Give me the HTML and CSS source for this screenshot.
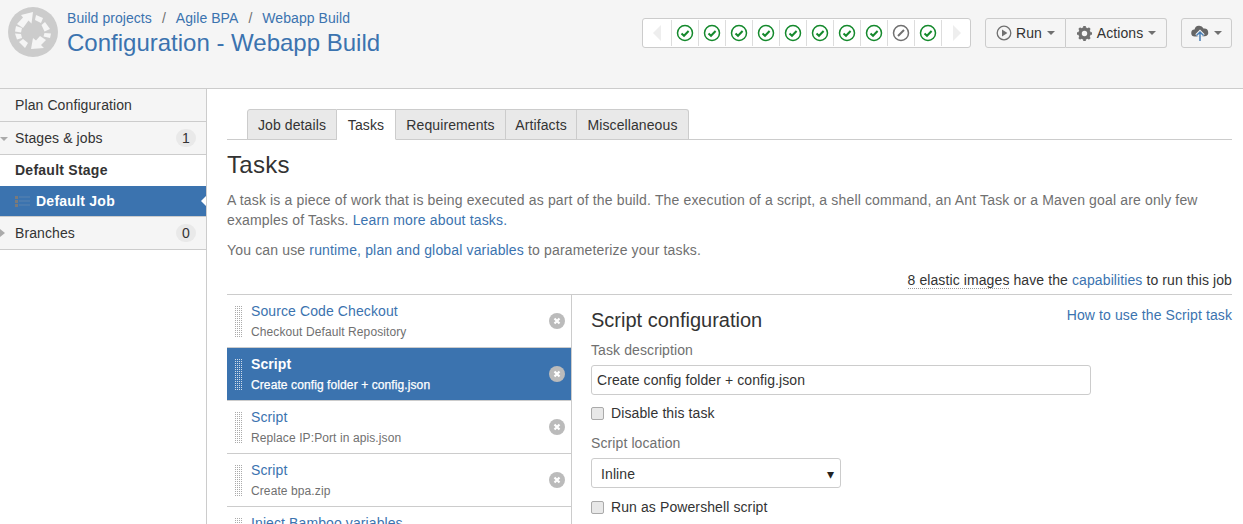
FILE: index.html
```html
<!DOCTYPE html>
<html lang="en">
<head>
    <meta charset="UTF-8">
    <title>Configuration - Webapp Build</title>
    <link rel="stylesheet" href="styles.css">
</head>
<body>
    <header class="page-header">
        <svg class="logo" width="50" height="50" viewBox="0 0 50 50">
            <circle cx="25" cy="25" r="25" fill="#ccc"/>
            <g fill="#f5f5f5">
                <path d="M25 5l-1.500 11.500-3-3L15 21l-6-4 6-6.500-2-2.500z"/>
                <path d="M28 8l7 3-2 5-6-3z"/>
                <path d="M37 15l5 7-5.500 2.500-3-6.500z"/>
                <path d="M36.500 26l6.500.500-1 4.500-6.500-1.500z"/>
                <path d="M23 42l2-11 3 2.500 4-4.500 6 4-5 5 3 3z"/>
                <path d="M15 32l5 4-3 5-6-6z"/>
                <path d="M7 26.500l6 .500 1 4-5 1.500z"/>
                <path d="M8 19l6 2-1 4.500-6-1z"/>
            </g>
        </svg>
        <div class="title-block">
            <div class="breadcrumb">
                <a href="#">Build projects</a><span class="sep">/</span><a href="#">Agile BPA</a><span class="sep">/</span><a href="#">Webapp Build</a>
            </div>
            <h1><a href="#">Configuration - Webapp Build</a></h1>
        </div>
        <div class="ribbon">
            <span class="cell arrow"><svg width="12" height="18" viewBox="0 0 12 18"><path d="M9 1v16L1 9z" fill="#eee"/></svg></span>
            <span class="cell"><svg class="ok" width="18" height="18" viewBox="0 0 18 18"><circle cx="9" cy="9" r="7.5"/><path d="M5.5 9.5l2.5 2.3 4.6-4.8"/></svg></span>
            <span class="cell"><svg class="ok" width="18" height="18" viewBox="0 0 18 18"><circle cx="9" cy="9" r="7.5"/><path d="M5.5 9.5l2.5 2.3 4.6-4.8"/></svg></span>
            <span class="cell"><svg class="ok" width="18" height="18" viewBox="0 0 18 18"><circle cx="9" cy="9" r="7.5"/><path d="M5.5 9.5l2.5 2.3 4.6-4.8"/></svg></span>
            <span class="cell"><svg class="ok" width="18" height="18" viewBox="0 0 18 18"><circle cx="9" cy="9" r="7.5"/><path d="M5.5 9.5l2.5 2.3 4.6-4.8"/></svg></span>
            <span class="cell"><svg class="ok" width="18" height="18" viewBox="0 0 18 18"><circle cx="9" cy="9" r="7.5"/><path d="M5.5 9.5l2.5 2.3 4.6-4.8"/></svg></span>
            <span class="cell"><svg class="ok" width="18" height="18" viewBox="0 0 18 18"><circle cx="9" cy="9" r="7.5"/><path d="M5.5 9.5l2.5 2.3 4.6-4.8"/></svg></span>
            <span class="cell"><svg class="ok" width="18" height="18" viewBox="0 0 18 18"><circle cx="9" cy="9" r="7.5"/><path d="M5.5 9.5l2.5 2.3 4.6-4.8"/></svg></span>
            <span class="cell"><svg class="ok" width="18" height="18" viewBox="0 0 18 18"><circle cx="9" cy="9" r="7.5"/><path d="M5.5 9.5l2.5 2.3 4.6-4.8"/></svg></span>
            <span class="cell"><svg class="skip" width="18" height="18" viewBox="0 0 18 18"><circle cx="9" cy="9" r="7.5"/><path d="M6 12l6-6"/></svg></span>
            <span class="cell"><svg class="ok" width="18" height="18" viewBox="0 0 18 18"><circle cx="9" cy="9" r="7.5"/><path d="M5.5 9.5l2.5 2.3 4.6-4.8"/></svg></span>
            <span class="cell arrow last"><svg width="12" height="18" viewBox="0 0 12 18"><path d="M3 1v16l8-8z" fill="#eee"/></svg></span>
        </div>
        <div class="btn-group">
            <button class="btn btn-run" type="button">
                <svg width="16" height="16" viewBox="0 0 16 16"><circle cx="8" cy="8" r="6.8" fill="none" stroke="#707070" stroke-width="1.3"/><path d="M6 4.5v7l5.4-3.5z" fill="#707070"/></svg>
                Run<span class="caret"></span>
            </button>
            <button class="btn btn-actions" type="button">
                <svg width="17" height="17" viewBox="0 0 17 17"><circle cx="8.5" cy="8.5" r="4.6" fill="none" stroke="#707070" stroke-width="3.2"/><path d="M8.5 1v15M1 8.500h15M3.200 3.200l10.600 10.600M13.800 3.200L3.200 13.800" stroke="#707070" stroke-width="2.600"/><circle cx="8.500" cy="8.500" r="2.700" fill="#f5f5f5"/></svg>
                Actions<span class="caret"></span>
            </button>
        </div>
        <button class="btn btn-cloud" type="button">
            <svg width="18" height="18" viewBox="0 0 18 18"><path d="M4 12.500a3.500 3.500 0 0 1-.5-7 4.800 4.800 0 0 1 9-1 3.900 3.900 0 0 1 1.500 7.800z" fill="#666"/><path d="M9 17V8M5.500 11.500L9 8l3.500 3.500" fill="none" stroke="#f5f5f5" stroke-width="3.400"/><path d="M9 17V8M5.500 11.500L9 8l3.500 3.500" fill="none" stroke="#4a7fb5" stroke-width="1.500"/></svg>
            <span class="caret"></span>
        </button>
    </header>

    <div class="page-body">
        <nav class="sidebar">
            <a class="side-row" href="#">Plan Configuration</a>
            <div class="side-row has-badge">
                <span class="twist twist-down"></span>Stages &amp; jobs<span class="badge">1</span>
            </div>
            <div class="side-stage">Default Stage</div>
            <div class="side-job">
                <svg width="15" height="11" viewBox="0 0 15 11"><path d="M0 0h3v3H0zM0 4h3v3H0zM0 8h3v3H0z" fill="#7a7a7a"/><path d="M4 1h11M4 5h11M4 9h11" stroke="#5b84b0"/></svg>
                Default Job
            </div>
            <div class="side-row has-badge">
                <span class="twist twist-right"></span>Branches<span class="badge">0</span>
            </div>
        </nav>

        <main class="content">
            <div class="tabs">
                <a class="tab" href="#">Job details</a>
                <a class="tab active" href="#">Tasks</a>
                <a class="tab" href="#">Requirements</a>
                <a class="tab" href="#">Artifacts</a>
                <a class="tab" href="#">Miscellaneous</a>
            </div>
            <h2 class="section-title">Tasks</h2>
            <p class="intro">A task is a piece of work that is being executed as part of the build. The execution of a script, a shell command, an Ant Task or a Maven goal are only few examples of Tasks. <a href="#">Learn more about tasks.</a></p>
            <p class="intro">You can use <a href="#">runtime, plan and global variables</a> to parameterize your tasks.</p>
            <div class="agents-note"><span class="dotted">8 elastic images</span> have the <a href="#">capabilities</a> to run this job</div>

            <div class="task-area">
                <ul class="task-list">
                    <li class="task">
                        <span class="grip"></span>
                        <div class="task-text"><a href="#">Source Code Checkout</a><small>Checkout Default Repository</small></div>
                        <svg class="remove" width="16" height="16" viewBox="0 0 16 16"><circle cx="8" cy="8" r="8"/><path d="M5.500 5.500l5 5M10.500 5.500l-5 5"/></svg>
                    </li>
                    <li class="task selected">
                        <span class="grip"></span>
                        <div class="task-text"><a href="#">Script</a><small>Create config folder + config.json</small></div>
                        <svg class="remove" width="16" height="16" viewBox="0 0 16 16"><circle cx="8" cy="8" r="8"/><path d="M5.500 5.500l5 5M10.500 5.500l-5 5"/></svg>
                    </li>
                    <li class="task">
                        <span class="grip"></span>
                        <div class="task-text"><a href="#">Script</a><small>Replace IP:Port in apis.json</small></div>
                        <svg class="remove" width="16" height="16" viewBox="0 0 16 16"><circle cx="8" cy="8" r="8"/><path d="M5.500 5.500l5 5M10.500 5.500l-5 5"/></svg>
                    </li>
                    <li class="task">
                        <span class="grip"></span>
                        <div class="task-text"><a href="#">Script</a><small>Create bpa.zip</small></div>
                        <svg class="remove" width="16" height="16" viewBox="0 0 16 16"><circle cx="8" cy="8" r="8"/><path d="M5.500 5.500l5 5M10.500 5.500l-5 5"/></svg>
                    </li>
                    <li class="task">
                        <span class="grip"></span>
                        <div class="task-text"><a href="#">Inject Bamboo variables</a></div>
                    </li>
                </ul>
                <form class="task-config">
                    <a class="help-link" href="#">How to use the Script task</a>
                    <h3>Script configuration</h3>
                    <label class="field-label" for="taskDesc">Task description</label>
                    <input class="text-input" id="taskDesc" type="text" value="Create config folder + config.json">
                    <label class="check"><input type="checkbox">Disable this task</label>
                    <label class="field-label" for="scriptLoc">Script location</label>
                    <div class="select-box" id="scriptLoc">Inline<span class="select-arrow">▾</span></div>
                    <label class="check check-last"><input type="checkbox">Run as Powershell script</label>
                </form>
            </div>
        </main>
    </div>
</body>
</html>
```

FILE: styles.css
```css
* {
    box-sizing: border-box;
}

html, body {
    height: 524px;
    overflow: hidden;
}

body {
    margin: 0;
    font-family: "Liberation Sans", Arial, sans-serif;
    font-size: 14px;
    line-height: 20px;
    letter-spacing: 0.1px;
    color: #333;
    background: #fff;
}

a {
    color: #3b73af;
    text-decoration: none;
}

/* header */
.page-header {
    display: flex;
    align-items: flex-start;
    height: 89px;
    background: #f5f5f5;
    border-bottom: 1px solid #ccc;
}

.logo {
    flex: none;
    margin: 7px 0 0 8px;
}

.title-block {
    flex: 1;
    margin: 8px 0 0 9px;
}

.breadcrumb {
    height: 20px;
    letter-spacing: 0.06px;
    color: #707070;
}

.sep {
    margin: 0 10px;
}

h1 {
    margin: 0;
    font-size: 24px;
    font-weight: normal;
    line-height: 30px;
    letter-spacing: 0;
}

.ribbon {
    display: flex;
    width: 329px;
    height: 30px;
    margin-top: 18px;
    padding: 1px;
    background: #fff;
    border: 1px solid #ccc;
    border-radius: 3px;
}

.cell {
    display: flex;
    align-items: center;
    justify-content: center;
    width: 27px;
    border-right: 1px solid #ddd;
}

.cell.arrow {
    width: 28px;
}

.cell.last {
    flex: 1;
    border-right: none;
}

.ok, .skip {
    fill: none;
    stroke-width: 1.500;
}

.ok {
    stroke: #14892c;
}

.ok path {
    stroke-width: 2;
}

.skip {
    stroke: #707070;
}

.skip path {
    stroke-width: 2;
}

.btn-group {
    display: flex;
    margin: 18px 0 0 14px;
}

.btn {
    display: flex;
    align-items: center;
    justify-content: center;
    gap: 4px;
    height: 30px;
    padding: 0;
    font: inherit;
    letter-spacing: 0.1px;
    color: #333;
    background: #f5f5f5;
    border: 1px solid #ccc;
}

.btn-run {
    width: 81px;
    border-radius: 3px 0 0 3px;
}

.btn-actions {
    width: 101px;
    border-left: none;
    border-radius: 0 3px 3px 0;
}

.btn-cloud {
    width: 51px;
    margin: 18px 11px 0 14px;
    border-radius: 3px;
}

.caret {
    width: 0;
    height: 0;
    margin-left: 1px;
    border: 4px solid transparent;
    border-top-color: #707070;
    border-bottom: none;
}

/* body layout */
.page-body {
    display: flex;
    height: 435px;
}

.sidebar {
    flex: none;
    width: 207px;
    border-right: 1px solid #ccc;
}

.side-row {
    position: relative;
    display: flex;
    align-items: center;
    height: 33px;
    padding: 0 10px 1px 15px;
    color: #333;
    background: #f5f5f5;
    border-bottom: 1px solid #ccc;
}

.twist {
    position: absolute;
    left: 0;
    width: 0;
    height: 0;
    border: 4px solid transparent;
}

.twist-down {
    top: 15px;
    border-width: 4px 4px 0 4px;
    border-top-color: #aaa;
}

.twist-right {
    top: 12px;
    border-width: 4px 0 4px 5px;
    border-left-color: #aaa;
}

.badge {
    margin-left: auto;
    min-width: 20px;
    height: 18px;
    font-size: 14px;
    line-height: 18px;
    text-align: center;
    background: #e9e9e9;
    border-radius: 9px;
}

.side-stage {
    height: 31px;
    padding: 5px 0 0 15px;
    font-weight: bold;
    letter-spacing: 0.25px;
}

.side-job {
    position: relative;
    display: flex;
    align-items: center;
    gap: 6px;
    height: 31px;
    padding: 0 0 0 15px;
    font-weight: bold;
    letter-spacing: 0.25px;
    color: #fff;
    background: #3b73af;
    border-bottom: 1px solid #ccc;
}

.side-job::after {
    content: "";
    position: absolute;
    top: 10px;
    right: 0;
    border: 5px solid transparent;
    border-left: none;
    border-right-color: #fff;
}

/* main content */
.content {
    flex: 1;
    min-width: 0;
    padding: 20px 11px 0 20px;
}

.tabs {
    display: flex;
    height: 31px;
    padding-left: 20px;
    border-bottom: 1px solid #ccc;
}

.tab {
    height: 31px;
    padding: 5px 0;
    text-align: center;
    letter-spacing: 0.1px;
    color: #333;
    background: #e9e9e9;
    border: 1px solid #ccc;
    border-left: none;
}

.tab:nth-child(1) {
    width: 90px;
    border-left: 1px solid #ccc;
    border-radius: 3px 0 0 0;
}

.tab:nth-child(2) {
    width: 59px;
}

.tab:nth-child(3) {
    width: 110px;
}

.tab:nth-child(4) {
    width: 71px;
}

.tab:nth-child(5) {
    width: 112px;
    border-radius: 0 3px 0 0;
}

.tab.active {
    background: #fff;
    border-bottom-color: #fff;
}

.section-title {
    margin: 10px 0 10px;
    font-size: 24px;
    font-weight: normal;
    line-height: 30px;
    letter-spacing: 0.3px;
}

.intro {
    margin: 0 0 10px;
    letter-spacing: 0.155px;
    color: #707070;
}

.agents-note {
    height: 25px;
    margin-top: 10px;
    text-align: right;
    border-bottom: 1px solid #ccc;
}

.dotted {
    border-bottom: 1px dotted #999;
}

.task-area {
    display: flex;
}

.task-list {
    flex: none;
    width: 345px;
    margin: 0;
    padding: 0;
    list-style: none;
    border-right: 1px solid #ccc;
}

.task {
    display: flex;
    align-items: flex-start;
    height: 53px;
    padding: 6px 6px 0 8px;
    border-bottom: 1px solid #ccc;
}

.grip {
    flex: none;
    width: 8px;
    height: 32px;
    margin: 4px 8px 0 0;
    background:
        repeating-linear-gradient(0deg, transparent 0 1px, #fff 1px 2px),
        repeating-linear-gradient(90deg, #aaa 0 1px, transparent 1px 2px);
}

.task-text {
    flex: 1;
}

.task-text a {
    display: block;
    height: 20px;
}

.task-text small {
    display: block;
    margin-top: 1px;
    font-size: 12px;
    line-height: 20px;
    color: #707070;
}

.remove {
    flex: none;
    margin-top: 12px;
    fill: #bbb;
}

.remove path {
    fill: none;
    stroke: #fff;
    stroke-width: 2.200;
}

.task.selected {
    background: #3b73af;
}

.task.selected a {
    font-weight: bold;
    color: #fff;
}

.task.selected small {
    color: #fff;
    -webkit-text-stroke: 0.25px #fff;
}

.task.selected .grip {
    background:
        repeating-linear-gradient(0deg, transparent 0 1px, #3b73af 1px 2px),
        repeating-linear-gradient(90deg, #cfdcea 0 1px, transparent 1px 2px);
}

.task-config {
    position: relative;
    flex: 1;
    padding: 13px 0 0 19px;
}

.help-link {
    float: right;
    margin-top: -3px;
}

h3 {
    margin: 0;
    font-size: 20px;
    font-weight: normal;
    line-height: 25px;
    letter-spacing: 0;
}

.field-label {
    display: block;
    height: 20px;
    margin-top: 7px;
    color: #707070;
}

.text-input {
    display: block;
    width: 500px;
    height: 30px;
    margin-top: 5px;
    padding: 0 5px;
    font: inherit;
    letter-spacing: 0.09px;
    color: #333;
    border: 1px solid #ccc;
    border-radius: 3px;
}

.check {
    display: flex;
    align-items: center;
    height: 20px;
    margin-top: 8px;
}

.check input {
    appearance: none;
    width: 13px;
    height: 13px;
    margin: 0 7px 0 0;
    background: #e8e8e8;
    border: 1px solid #aaa;
    border-radius: 2px;
}

.check + .field-label {
    margin-top: 10px;
}

.check-last {
    margin-top: 9px;
}

.select-box {
    display: flex;
    align-items: center;
    justify-content: space-between;
    width: 250px;
    height: 30px;
    margin-top: 5px;
    padding: 2px 6px 0 9px;
    color: #333;
    background: #fff;
    border: 1px solid #ccc;
    border-radius: 3px;
}

.select-arrow {
    font-size: 14px;
    color: #222;
}
```
